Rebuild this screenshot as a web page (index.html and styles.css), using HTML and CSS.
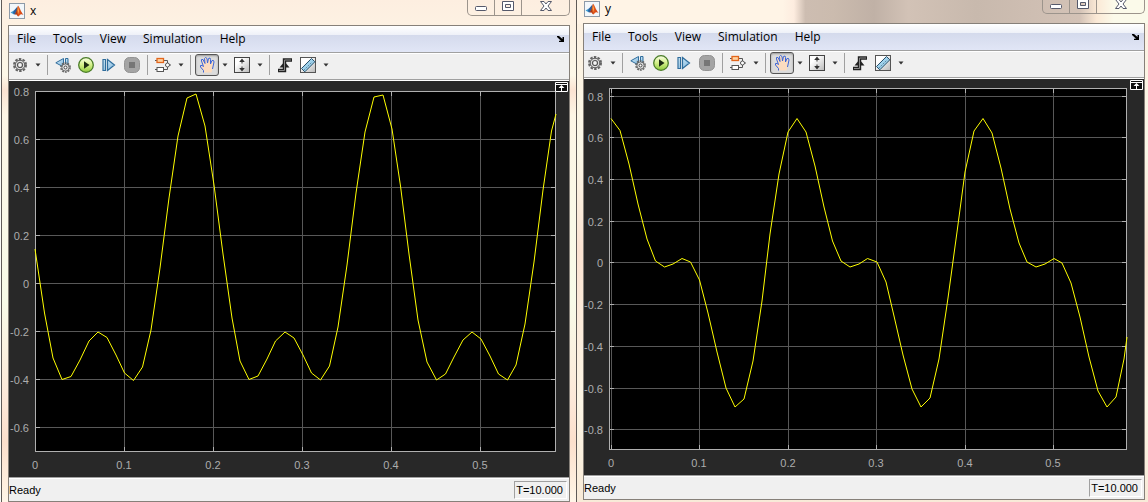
FILE: index.html
```html
<!DOCTYPE html>
<html lang="en">
<head>
<meta charset="utf-8">
<title>Scopes</title>
<link rel="stylesheet" href="styles.css">
</head>
<body>
<svg class="defs" aria-hidden="true">
  <defs>
    <linearGradient id="green" x2="0" y2="1"><stop offset="0" stop-color="#f8fde4"/><stop offset=".5" stop-color="#d4f088"/><stop offset="1" stop-color="#8cc83c"/></linearGradient>
    <linearGradient id="blue" x2="1" y2="1"><stop offset="0" stop-color="#d8effb"/><stop offset="1" stop-color="#7fb6dc"/></linearGradient>
    <linearGradient id="paper" x2="1" y2="1"><stop offset=".3" stop-color="#fff"/><stop offset="1" stop-color="#b8b8b8"/></linearGradient>
    <linearGradient id="flame" x2="1"><stop offset="0" stop-color="#7a1f10"/><stop offset=".5" stop-color="#e8581c"/><stop offset="1" stop-color="#c8380c"/></linearGradient>
  </defs>
  <symbol id="i-logo" viewBox="0 0 16 16">
    <rect x=".5" y=".5" width="15" height="15" fill="#f2f7fb" stroke="#8d9aa8"/>
    <path d="M1.5 9.5 5 7.5 7 8.5 5 11.5Z" fill="#3a9ad0"/>
    <path d="M5 7.5 8.5 3.5 8 8 5.5 11.5 4 10Z" fill="#2a5f9e"/>
    <path d="M9 2.5C10.500 4 11.500 8 14.500 12 12.500 10.500 11.500 11 10 13 9 14 8.500 13 7.500 11.500L5.500 11.500C7.500 9.500 8 5 9 2.500Z" fill="url(#flame)"/>
    <path d="M9 3.500 10 8 9 11.500 8.500 7Z" fill="#ffb052"/>
  </symbol>
  <symbol id="i-gear" viewBox="0 0 16 16">
    <circle cx="8" cy="8" r="6" fill="none" stroke="#666" stroke-width="2" stroke-dasharray="2.500 1.270"/>
    <circle cx="8" cy="8" r="4.800" fill="#dcdcdc" stroke="#555" stroke-width="1"/>
    <circle cx="8" cy="8" r="2.500" fill="#f4f4f4" stroke="#555" stroke-width="1.200"/>
  </symbol>
  <symbol id="i-back" viewBox="0 0 16 16">
    <path d="M8.500 1.500V10L.8 5.800Z" fill="url(#blue)" stroke="#2f6d9c"/>
    <path d="M10.500 1.500H13V8H10.500Z" fill="url(#blue)" stroke="#2f6d9c"/>
    <circle cx="10.500" cy="10.500" r="4.600" fill="none" stroke="#666" stroke-width="1.500" stroke-dasharray="1.900 .99"/>
    <circle cx="10.500" cy="10.500" r="3.600" fill="#e4e4e4" stroke="#555" stroke-width=".8"/>
    <circle cx="10.500" cy="10.500" r="1.500" fill="#fff" stroke="#444"/>
  </symbol>
  <symbol id="i-play" viewBox="0 0 16 16">
    <circle cx="8" cy="8" r="7.300" fill="url(#green)" stroke="#4a7c28" stroke-width="1.300"/>
    <path d="M6 4.200 11.500 8 6 11.800Z" fill="#1c2a12"/>
  </symbol>
  <symbol id="i-step" viewBox="0 0 16 16">
    <path d="M2 2.500H4.500V13.500H2ZM6.500 2.500 13.500 8 6.500 13.500Z" fill="url(#blue)" stroke="#2f6d9c" stroke-width="1.200"/>
  </symbol>
  <symbol id="i-stop" viewBox="0 0 16 16">
    <rect x=".5" y=".5" width="15" height="15" rx="5" fill="#a4a4a4" stroke="#939393"/>
    <rect x="5" y="5" width="6" height="6" fill="#767676"/>
  </symbol>
  <symbol id="i-blocks" viewBox="0 0 16 16">
    <path d="M8 3.500H12.500V6M12.500 10V12.500H8M0 3.500H2M0 12.500H2M10 8H16" fill="none" stroke="#555"/>
    <rect x="2" y="1.500" width="6.500" height="4" fill="#ffd2a0" stroke="#e2661c" stroke-width="1.300"/>
    <rect x="2" y="10.500" width="6.500" height="4" fill="#fff" stroke="#555"/>
    <circle cx="12.500" cy="8" r="2" fill="#fff" stroke="#555"/>
  </symbol>
  <symbol id="i-hand" viewBox="0 0 16 16">
    <path d="M4.500 15.500V13.500L1.500 10V8.500H3L4.500 9.500 2.500 4V2.500H4L6 6.500 5.500 1.500 6.500.5 8 1.500 8.500 6 9.500 1.500 11 1 11.500 2.500 11.500 7 13 3.500 14.500 3.500 15 5 13.500 12 12.500 15.500Z" fill="#fbdcc0"/>
    <path d="M4.500 15.500V13.500L1.500 10V8.500H3L4.500 9.500 2.500 4V2.500H4L6 6.500 5.500 1.500 6.500.5 8 1.500 8.500 6 9.500 1.500 11 1 11.500 2.500 11.500 7 13 3.500 14.500 3.500 15 5 13.500 12" fill="none" stroke="#3c66d8"/>
  </symbol>
  <symbol id="i-fit" viewBox="0 0 16 16">
    <rect x=".5" y=".5" width="15" height="15" fill="url(#paper)" stroke="#444"/>
    <path d="M8 1.500 10.800 5H8.500V6.500H7.500V5H5.200ZM8 14.500 10.800 11H8.500V9.500H7.500V11H5.200Z" fill="#333"/>
  </symbol>
  <symbol id="i-trigger" viewBox="0 0 16 16">
    <path d="M1 13.500H7.500V3H15" fill="none" stroke="#222" stroke-width="3.400"/>
    <path d="M2.500 10.500 7.500 4.500 12.500 10.500Z" fill="#222"/>
    <path d="M2 13.500H7.500V3H14" fill="none" stroke="#888" stroke-width="1"/>
  </symbol>
  <symbol id="i-ruler" viewBox="0 0 16 16">
    <rect x=".5" y=".5" width="15" height="15" fill="url(#paper)" stroke="#555"/>
    <path d="M1.500 11.500 11.500 1.500 14.800 4.800 4.800 14.800Z" fill="#9fd2ec" stroke="#28506c"/>
    <path d="M4.500 12.500 12.500 4.500" stroke="#28506c" stroke-dasharray="1 1.800"/>
  </symbol>
  <symbol id="i-drop" viewBox="0 0 6 4"><path d="M.5.5H5.500L3 3.500Z" fill="#333"/></symbol>
  <symbol id="i-dock" viewBox="0 0 8 7"><path d="M0 0H2L5.500 3V1H7V6H2V4.800H4L0 1Z" fill="#000"/></symbol>
  <symbol id="i-min" viewBox="0 0 12 5"><rect x=".5" y=".5" width="11" height="4" rx="1" fill="#fff" stroke="#55596b"/></symbol>
  <symbol id="i-max" viewBox="0 0 12 10"><path d="M.5.5H11.500V9.500H.5ZM3.500 3.500V6.500H8.500V3.500Z" fill="#fff" fill-rule="evenodd" stroke="#55596b"/></symbol>
  <symbol id="i-close" viewBox="0 0 12 10"><path d="M.5.500H4L6 3 8 .5H11.500L8 5 11.500 9.500H8L6 7 4 9.500H.5L4 5Z" fill="#fff" stroke="#55596b"/></symbol>
  <symbol id="i-pin" viewBox="0 0 13 10"><path d="M.5.5H12.500V9.500H.5ZM1 2.500H12" fill="#111" stroke="#fff"/><path d="M6.500 3 9.500 6H7V9H6V6H3.500Z" fill="#fff"/></symbol>
</svg>

<main class="desktop">
  <section class="window window-x" aria-label="x">
    <header class="title">
      <svg class="icon"><use href="#i-logo"/></svg>
      <h1>x</h1>
      <div class="caption">
        <button aria-label="Minimize"><svg width="12" height="5"><use href="#i-min"/></svg></button>
        <button aria-label="Maximize"><svg width="12" height="10"><use href="#i-max"/></svg></button>
        <button class="close" aria-label="Close"><svg width="12" height="10"><use href="#i-close"/></svg></button>
      </div>
    </header>
    <div class="frame">
      <nav class="menu">
        <button>File</button><button>Tools</button><button>View</button><button>Simulation</button><button>Help</button>
        <button class="dock" aria-label="Dock"><svg width="8" height="7"><use href="#i-dock"/></svg></button>
      </nav>
      <div class="toolbar" role="toolbar">
        <button aria-label="Settings"><svg class="icon"><use href="#i-gear"/></svg></button>
        <button class="drop" aria-label="More settings"><svg><use href="#i-drop"/></svg></button>
        <i class="sep"></i>
        <button aria-label="Stepping options"><svg class="icon"><use href="#i-back"/></svg></button>
        <button aria-label="Run"><svg class="icon"><use href="#i-play"/></svg></button>
        <button aria-label="Step forward"><svg class="icon"><use href="#i-step"/></svg></button>
        <button aria-label="Stop" disabled><svg class="icon"><use href="#i-stop"/></svg></button>
        <i class="sep"></i>
        <button aria-label="Highlight block"><svg class="icon"><use href="#i-blocks"/></svg></button>
        <button class="drop" aria-label="More blocks"><svg><use href="#i-drop"/></svg></button>
        <i class="sep"></i>
        <button class="pressed" aria-label="Pan" aria-pressed="true"><svg class="icon"><use href="#i-hand"/></svg></button>
        <button class="drop" aria-label="More pan"><svg><use href="#i-drop"/></svg></button>
        <button aria-label="Scale axes"><svg class="icon"><use href="#i-fit"/></svg></button>
        <button class="drop" aria-label="More scaling"><svg><use href="#i-drop"/></svg></button>
        <i class="sep"></i>
        <button aria-label="Triggers"><svg class="icon"><use href="#i-trigger"/></svg></button>
        <button aria-label="Measurements"><svg class="icon"><use href="#i-ruler"/></svg></button>
        <button class="drop" aria-label="More measurements"><svg><use href="#i-drop"/></svg></button>
      </div>
      <div class="scope">
        <svg class="plot" viewBox="9 81 560 396" role="img" aria-label="Signal x over time">
          <rect x="35" y="91" width="521" height="361" fill="#000"/>
          <path class="grid" d="M124.500 92V451M213.500 92V451M302.500 92V451M391.500 92V451M480.500 92V451M36 139.500H555M36 187.500H555M36 235.500H555M36 283.500H555M36 331.500H555M36 379.500H555M36 427.500H555"/>
          <path class="axis" d="M35.500 91.500H555.500V451.500H35.500ZM124.500 91v5M213.500 91v5M302.500 91v5M391.500 91v5M480.500 91v5M124.500 452v-5M213.500 452v-5M302.500 452v-5M391.500 452v-5M480.500 452v-5M35 139.500h5M35 187.500h5M35 235.500h5M35 283.500h5M35 331.500h5M35 379.500h5M35 427.500h5M556 139.500h-5M556 187.500h-5M556 235.500h-5M556 283.500h-5M556 331.500h-5M556 379.500h-5M556 427.500h-5"/>
          <polyline class="curve" points="35,249 44.500,313 53,358 62,379.500 71,376.500 80,360 89,341 98,332 107,337.500 116,355 124.500,373 133.500,380.500 142.500,367 151,330 160,268 169,198 178,136 187,98 196,94 205,126 214,185 223,254 232,318 240,361 249,379.500 258,376 267,359 275.500,341 285,332 294,338 303,355 311.500,373 320.500,380 329.500,366 338,327 347,265 356,193 365,132 374,97 383,95 392,129 400.500,186 409,254 418,320 427,362 436.500,380 445.500,374 454,357 463,340 472,332 481,339 490,356 498.500,374 507.500,380 516,365 525,324 534,262 543,190 551.500,131 556,114"/>
          <g class="ylab"><text x="29" y="96">0.8</text><text x="29" y="144">0.6</text><text x="29" y="192">0.4</text><text x="29" y="240">0.2</text><text x="29" y="288">0</text><text x="29" y="336">-0.2</text><text x="29" y="384">-0.4</text><text x="29" y="432">-0.6</text></g>
          <g class="xlab"><text x="35" y="469">0</text><text x="124" y="469">0.1</text><text x="213" y="469">0.2</text><text x="302" y="469">0.3</text><text x="391" y="469">0.4</text><text x="480" y="469">0.5</text></g>
        </svg>
        <button class="pin" aria-label="Maximize axes"><svg width="13" height="10"><use href="#i-pin"/></svg></button>
      </div>
      <footer class="status"><span>Ready</span><output>T=10.000</output></footer>
    </div>
  </section>

  <section class="window window-y" aria-label="y">
    <header class="title">
      <svg class="icon"><use href="#i-logo"/></svg>
      <h1>y</h1>
      <div class="caption">
        <button aria-label="Minimize"><svg width="12" height="5"><use href="#i-min"/></svg></button>
        <button aria-label="Maximize"><svg width="12" height="10"><use href="#i-max"/></svg></button>
        <button class="close" aria-label="Close"><svg width="12" height="10"><use href="#i-close"/></svg></button>
      </div>
    </header>
    <div class="frame">
      <nav class="menu">
        <button>File</button><button>Tools</button><button>View</button><button>Simulation</button><button>Help</button>
        <button class="dock" aria-label="Dock"><svg width="8" height="7"><use href="#i-dock"/></svg></button>
      </nav>
      <div class="toolbar" role="toolbar">
        <button aria-label="Settings"><svg class="icon"><use href="#i-gear"/></svg></button>
        <button class="drop" aria-label="More settings"><svg><use href="#i-drop"/></svg></button>
        <i class="sep"></i>
        <button aria-label="Stepping options"><svg class="icon"><use href="#i-back"/></svg></button>
        <button aria-label="Run"><svg class="icon"><use href="#i-play"/></svg></button>
        <button aria-label="Step forward"><svg class="icon"><use href="#i-step"/></svg></button>
        <button aria-label="Stop" disabled><svg class="icon"><use href="#i-stop"/></svg></button>
        <i class="sep"></i>
        <button aria-label="Highlight block"><svg class="icon"><use href="#i-blocks"/></svg></button>
        <button class="drop" aria-label="More blocks"><svg><use href="#i-drop"/></svg></button>
        <i class="sep"></i>
        <button class="pressed" aria-label="Pan" aria-pressed="true"><svg class="icon"><use href="#i-hand"/></svg></button>
        <button class="drop" aria-label="More pan"><svg><use href="#i-drop"/></svg></button>
        <button aria-label="Scale axes"><svg class="icon"><use href="#i-fit"/></svg></button>
        <button class="drop" aria-label="More scaling"><svg><use href="#i-drop"/></svg></button>
        <i class="sep"></i>
        <button aria-label="Triggers"><svg class="icon"><use href="#i-trigger"/></svg></button>
        <button aria-label="Measurements"><svg class="icon"><use href="#i-ruler"/></svg></button>
        <button class="drop" aria-label="More measurements"><svg><use href="#i-drop"/></svg></button>
      </div>
      <div class="scope">
        <svg class="plot" viewBox="584 79 560 396" role="img" aria-label="Signal y over time">
          <rect x="609" y="88" width="518" height="362" fill="#000"/>
          <path class="grid" d="M611.500 89V449M699.500 89V449M788.500 89V449M876.500 89V449M965.500 89V449M1053.500 89V449M610 96.500H1126M610 137.500H1126M610 179.500H1126M610 221.500H1126M610 262.500H1126M610 304.500H1126M610 346.500H1126M610 388.500H1126M610 429.500H1126"/>
          <path class="axis" d="M609.500 88.500H1126.500V449.500H609.500ZM611.500 88v5M699.500 88v5M788.500 88v5M876.500 88v5M965.500 88v5M1053.500 88v5M611.500 450v-5M699.500 450v-5M788.500 450v-5M876.500 450v-5M965.500 450v-5M1053.500 450v-5M609 96.500h5M609 137.500h5M609 179.500h5M609 221.500h5M609 262.500h5M609 304.500h5M609 346.500h5M609 388.500h5M609 429.500h5M1127 96.500h-5M1127 137.500h-5M1127 179.500h-5M1127 221.500h-5M1127 262.500h-5M1127 304.500h-5M1127 346.500h-5M1127 388.500h-5M1127 429.500h-5"/>
          <polyline class="curve" points="611,118.500 620,130.500 629,164 638,204 647,239 655.500,261 664.500,267 673,264 682,258.500 690.500,262 699.500,280 708,313 717,352 726,388 735,407 744,399 753,361 762,301 770,234 779,174 788,132 797,118.500 806,132 815,166 824,207 832.500,241 841,261 850,267 859,264 867.500,258.500 877,262 886,282 894,316 903,355 912,389 921,407 930,398 939,359 948,298 957,232 965,172 974,131 983,118.500 992,133 1001,168 1010,209 1019,243 1027,262 1036,267 1045,264 1054,258.500 1062,263 1071,283 1080,317 1089,357 1098,391 1107,407 1116,397 1124,359 1127,337"/>
          <g class="ylab"><text x="603" y="101">0.8</text><text x="603" y="142">0.6</text><text x="603" y="184">0.4</text><text x="603" y="226">0.2</text><text x="603" y="267">0</text><text x="603" y="309">-0.2</text><text x="603" y="351">-0.4</text><text x="603" y="393">-0.6</text><text x="603" y="434">-0.8</text></g>
          <g class="xlab"><text x="611" y="467">0</text><text x="699" y="467">0.1</text><text x="788" y="467">0.2</text><text x="876" y="467">0.3</text><text x="965" y="467">0.4</text><text x="1053" y="467">0.5</text></g>
        </svg>
        <button class="pin" aria-label="Maximize axes"><svg width="13" height="10"><use href="#i-pin"/></svg></button>
      </div>
      <footer class="status"><span>Ready</span><output>T=10.000</output></footer>
    </div>
  </section>
</main>
</body>
</html>
```
FILE: styles.css
```css
body {
  margin: 0;
  background: #fdf3e4;
  font-family: "Liberation Sans", Arial, sans-serif;
  font-size: 11px;
  color: #000;
}

button {
  margin: 0;
  padding: 0;
  border: 0;
  background: none;
  color: inherit;
  font: inherit;
}

svg { display: block; }

.defs {
  position: absolute;
  width: 0;
  height: 0;
}

.icon {
  width: 16px;
  height: 16px;
}

.desktop {
  display: flex;
  align-items: flex-start;
  min-height: 100vh;
  background: linear-gradient(#fdf3e4, #fdf3e4 98%, #ead9cb);
}

.window {
  flex: 1;
  min-width: 0;
}

.window-x {
  padding: 0 7px 0 8px;
  background:
    linear-gradient(90deg, #fbfbf6 1px, #5f5a57 1px, #5f5a57 2px, transparent 2px, transparent calc(100% - 1px), #5f5a57 calc(100% - 1px)),
    linear-gradient(#fdeee0, #fdf8e8 15%, #fbe3d2 18%, #fdf6e6 23%, #f8fbe8 60%, #fde8d8 80%, #fce0cc 88%, #fff6e8);
}

.window-y {
  padding: 0 3px 2px 6px;
  background:
    linear-gradient(90deg, #fff4e6 36%, #fdecdf 38%, #cdbdb1 40%, #cbbbae 45%, #c0b1a6 52%, #d2c2b6 58%, #c8b9ad 70%, #d3c2b6 88%, #fbe9d6 91%, #fbfaea 94%) top / 100% 24px no-repeat,
    linear-gradient(#fdf0e0, #fbf8e8 30%, #fbe3d2 50%, #fdf6e6 80%, #f8ead8);
}

.title {
  display: flex;
  align-items: flex-end;
  height: 25px;
  padding-left: 1px;
}

.window-y .title { height: 23px; }

.title .icon { margin-bottom: 6px; }

.title h1 {
  margin: 0 auto 6px 5px;
  font: 12px/16px "Open Sans", "Noto Sans", sans-serif;
}

.caption {
  display: flex;
  align-self: stretch;
  margin: 0 0 9px;
  border: 1px solid #9c948c;
  border-top: 0;
  border-radius: 0 0 5px 5px;
  overflow: hidden;
}

.caption button {
  display: flex;
  align-items: flex-end;
  justify-content: center;
  width: 27px;
  padding-bottom: 4px;
  border-right: 1px solid #9c948c;
  box-sizing: border-box;
}

.caption .close {
  width: 47px;
  border-right: 0;
}

.frame {
  border: 1px solid #868079;
  background: #f0f0f0;
}

.menu {
  display: flex;
  align-items: center;
  gap: 17px;
  height: 26px;
  padding: 0 4px 0 8px;
  border-bottom: 1px solid #a0a0a0;
  background: linear-gradient(#fff, #eef1f8 9px, #d4daec 9px, #e1e6f6);
  font: 12px/16px "Open Sans", "Noto Sans", sans-serif;
}

.menu .dock { margin-left: auto; }

.toolbar {
  display: flex;
  align-items: flex-start;
  height: 25px;
  border-top: 1px solid #fff;
  border-bottom: 1px solid #a0a0a0;
  box-shadow: 0 1px #fff;
  margin-bottom: 1px;
}

.toolbar button {
  display: flex;
  align-items: center;
  justify-content: center;
  flex: none;
  width: 23px;
  height: 22px;
}

.toolbar button .icon { margin-right: 1px; }

.toolbar .drop { width: 12px; }

.drop svg {
  width: 6px;
  height: 4px;
}

.toolbar .pressed {
  width: 24px;
  border: 1px solid #555;
  border-radius: 3px;
  background: #dcdcdc;
  box-shadow: inset 0 1px 2px #999;
  box-sizing: border-box;
}

.sep {
  flex: none;
  width: 1px;
  height: 20px;
  margin: 1px 4px 0 3px;
  background: #a0a0a0;
}

.scope {
  position: relative;
  background: #282828;
}

.plot {
  width: 100%;
  height: auto;
}

.grid,
.axis {
  fill: none;
  stroke: #585858;
  shape-rendering: crispEdges;
}

.axis { stroke: #b0b0b0; }

.curve {
  fill: none;
  stroke: #ff0;
}

.plot text {
  fill: #adadad;
  font-size: 11px;
}

.ylab { text-anchor: end; }
.xlab { text-anchor: middle; }

.pin {
  position: absolute;
  top: 1px;
  right: 1px;
}

.status {
  display: flex;
  align-items: center;
  justify-content: space-between;
  height: 23px;
  padding-right: 2px;
  border-top: 1px solid #a0a0a0;
  box-shadow: inset 0 1px #fff;
}

.status output {
  padding: 2px 3px 2px 1px;
  border: 1px solid;
  border-color: #a0a0a0 #fff #fff #a0a0a0;
}
```
